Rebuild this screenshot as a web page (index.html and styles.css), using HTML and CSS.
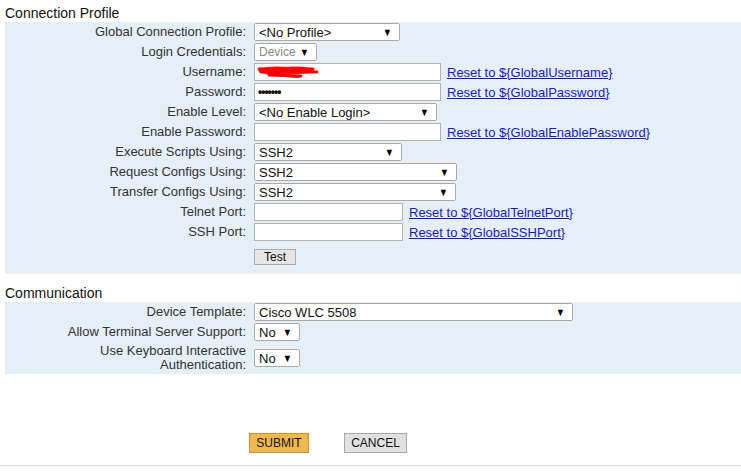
FILE: index.html
```html
<!DOCTYPE html>
<html>
<head>
<meta charset="utf-8">
<link rel="stylesheet" href="styles.css">
</head>
<body>
<div class="page">
  <div class="heading">Connection Profile</div>
  <div class="panel p1">
    <div class="row"><div class="label">Global Connection Profile:</div><div class="cell"><span class="sel w146">&lt;No Profile&gt;<span class="arr">▼</span></span></div></div>
    <div class="row"><div class="label">Login Credentials:</div><div class="cell"><span class="sel w63 dis">Device<span class="arr">▼</span></span></div></div>
    <div class="row"><div class="label">Username:</div><div class="cell"><span class="inp w187"><svg class="scribble" width="70" height="16" viewBox="0 0 70 16"><path d="M3 5 C12 2 24 2 34 3 C44 2 52 3 58 5 C50 6 40 6 30 6 C42 7 54 7 62 8 C52 10 40 10 28 10 C36 11 42 12 46 14 C38 14 30 13 22 12 C16 11 8 10 4 8 Z" fill="#ff1a1a"/><path d="M4 5 L58 5 M6 8 L62 8 M14 11 L46 12" stroke="#ff0000" stroke-width="3" fill="none" stroke-linecap="round"/></svg></span><a class="lnk" href="#">Reset to ${GlobalUsername}</a></div></div>
    <div class="row"><div class="label">Password:</div><div class="cell"><span class="inp w187 pw">•••••••</span><a class="lnk" href="#">Reset to ${GlobalPassword}</a></div></div>
    <div class="row"><div class="label">Enable Level:</div><div class="cell"><span class="sel w183">&lt;No Enable Login&gt;<span class="arr">▼</span></span></div></div>
    <div class="row"><div class="label">Enable Password:</div><div class="cell"><span class="inp w187"></span><a class="lnk" href="#">Reset to ${GlobalEnablePassword}</a></div></div>
    <div class="row"><div class="label">Execute Scripts Using:</div><div class="cell"><span class="sel w148">SSH2<span class="arr">▼</span></span></div></div>
    <div class="row"><div class="label">Request Configs Using:</div><div class="cell"><span class="sel w203">SSH2<span class="arr">▼</span></span></div></div>
    <div class="row"><div class="label">Transfer Configs Using:</div><div class="cell"><span class="sel w202">SSH2<span class="arr">▼</span></span></div></div>
    <div class="row"><div class="label">Telnet Port:</div><div class="cell"><span class="inp w149"></span><a class="lnk" href="#">Reset to ${GlobalTelnetPort}</a></div></div>
    <div class="row"><div class="label">SSH Port:</div><div class="cell"><span class="inp w149"></span><a class="lnk" href="#">Reset to ${GlobalSSHPort}</a></div></div>
    <div class="row testrow"><div class="label"></div><div class="cell"><span class="btn test">Test</span></div></div>
  </div>
  <div class="heading h2">Communication</div>
  <div class="panel p2">
    <div class="row"><div class="label">Device Template:</div><div class="cell"><span class="sel w319">Cisco WLC 5508<span class="arr">▼</span></span></div></div>
    <div class="row"><div class="label">Allow Terminal Server Support:</div><div class="cell"><span class="sel w46">No<span class="arr">▼</span></span></div></div>
    <div class="row tall"><div class="label">Use Keyboard Interactive<br>Authentication:</div><div class="cell"><span class="sel w46">No<span class="arr">▼</span></span></div></div>
  </div>
  <div class="actions">
    <span class="btn submit">SUBMIT</span>
    <span class="btn cancel">CANCEL</span>
  </div>
  <div class="footer-line"></div>
</div>
</body>
</html>
```
FILE: styles.css
```css
html, body {
  margin: 0;
  padding: 0;
  background: #ffffff;
}
body {
  font-family: "Liberation Sans", Arial, sans-serif;
  font-size: 13px;
  color: #222;
}
.page {
  width: 741px;
  height: 471px;
  padding-left: 5px;
  box-sizing: border-box;
  display: flex;
  flex-direction: column;
}
.heading {
  height: 22px;
  line-height: 16px;
  padding-top: 5px;
  box-sizing: border-box;
  font-size: 14px;
  color: #111;
}
.heading.h2 {
  margin-top: 6px;
  height: 22px;
  padding-top: 5px;
}
.panel {
  background: #e5eff8;
}
.p1 {
  height: 252px;
}
.p2 {
  height: 72px;
}
.row {
  display: grid;
  grid-template-columns: 241px auto;
  column-gap: 8px;
  height: 20px;
  align-items: center;
}
.row.tall {
  height: 32px;
}
.label {
  text-align: right;
  color: #333;
  line-height: 14px;
}
.cell {
  display: flex;
  align-items: center;
  gap: 6px;
  height: 18px;
}
.testrow {
  margin-top: 5px;
}
.sel, .inp {
  box-sizing: border-box;
  height: 18px;
  background: #fff;
  border: 1px solid #a9a9a9;
  display: flex;
  align-items: center;
  position: relative;
  padding-left: 4px;
  color: #111;
  font-size: 13px;
  white-space: nowrap;
}
.sel {
  border-radius: 2px;
}
.sel.dis {
  color: #8a8a8a;
  font-size: 12px;
}
.arr {
  position: absolute;
  right: 6px;
  top: 2px;
  font-size: 11px;
  line-height: 12px;
  color: #000;
  transform: scaleX(0.85);
}
.inp {
  border-color: #b3b3b3;
}
.pw {
  font-size: 12px;
  font-weight: bold;
  letter-spacing: -1px;
  padding-left: 3px;
}
.scribble {
  position: absolute;
  left: 0;
  top: 0;
}
.w46 { width: 46px; }
.w63 { width: 63px; }
.w146 { width: 146px; }
.w148 { width: 148px; }
.w149 { width: 149px; }
.w183 { width: 183px; }
.w187 { width: 187px; }
.w202 { width: 202px; }
.w203 { width: 203px; }
.w319 { width: 319px; }
.lnk {
  color: #1a1acc;
  text-decoration: underline;
  white-space: nowrap;
}
.btn {
  box-sizing: border-box;
  display: inline-flex;
  align-items: center;
  justify-content: center;
  font-size: 12px;
  color: #111;
}
.test {
  width: 42px;
  height: 16px;
  background: #e6e6e6;
  border: 1px solid #adadad;
  font-size: 12px;
}
.actions {
  display: flex;
  margin-top: 59px;
  padding-left: 244px;
  gap: 35px;
  height: 20px;
}
.submit {
  width: 60px;
  height: 20px;
  background: #f1b84d;
  border: 1px solid #c8923a;
}
.cancel {
  width: 63px;
  height: 20px;
  background: #e1e1e1;
  border: 1px solid #a7a7a7;
}
.footer-line {
  margin-top: 12px;
  margin-left: -5px;
  height: 1px;
  background: #dcdcdc;
}
```
